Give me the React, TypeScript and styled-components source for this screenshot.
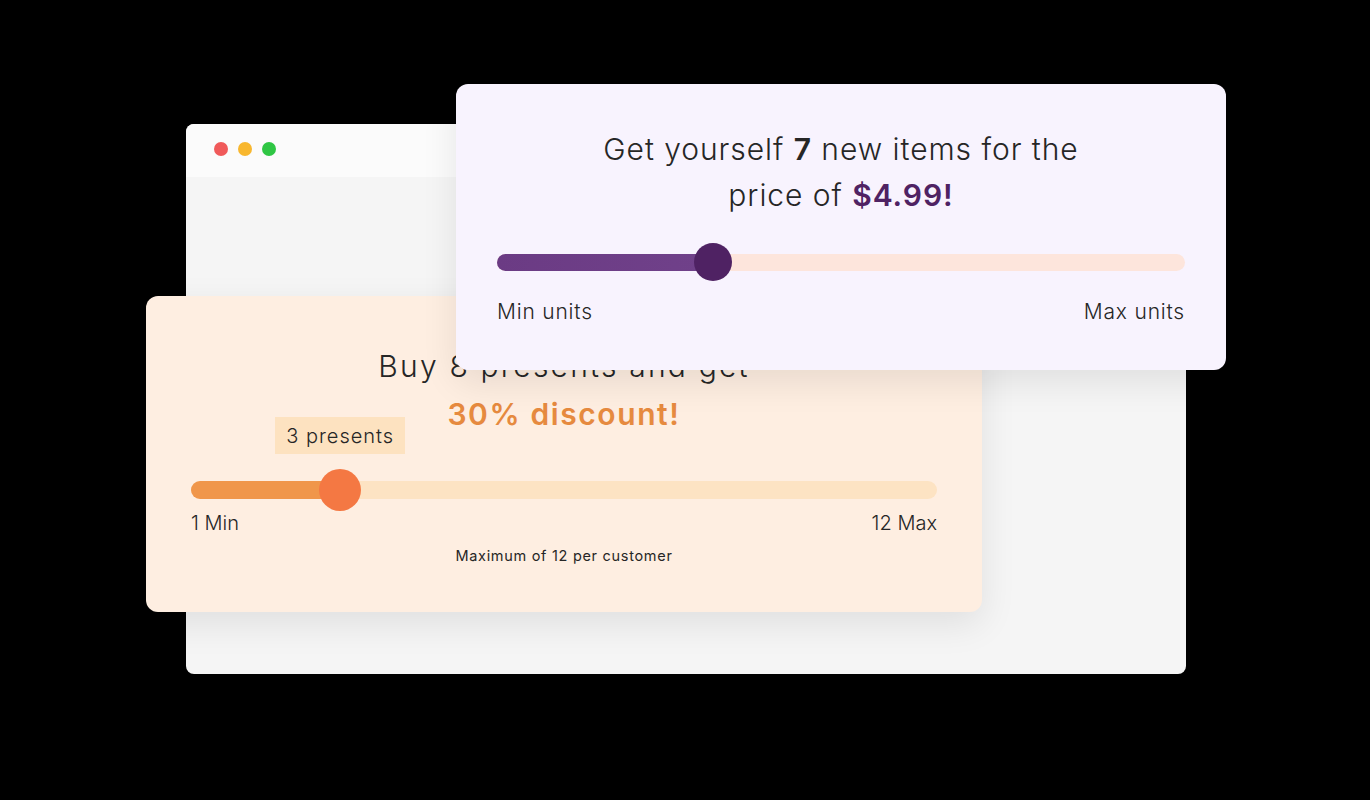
import styled, { createGlobalStyle } from "styled-components";

const GlobalStyle = createGlobalStyle`
  html, body {
    margin: 0;
    padding: 0;
    background: #000;
  }
  body {
    font-family: Inter, "Open Sans", "Noto Sans", sans-serif;
    color: #242424;
  }
`;

const Stage = styled.div`
  position: relative;
  width: 1370px;
  height: 800px;
  overflow: hidden;
  background: #000;
`;

const BrowserWindow = styled.div`
  position: absolute;
  left: 186px;
  top: 124px;
  width: 1000px;
  height: 550px;
  border-radius: 8px;
  overflow: hidden;
  background: #f5f5f5;
  display: flex;
  flex-direction: column;
`;

const BrowserBar = styled.div`
  height: 53px;
  flex-shrink: 0;
  background: #fbfbfb;
  display: flex;
  align-items: center;
  gap: 10px;
  padding: 0 0 4px 28px;
  box-sizing: border-box;
`;

const Dot = styled.span<{ $color: string }>`
  width: 14px;
  height: 14px;
  border-radius: 50%;
  background: ${(p) => p.$color};
`;

const Card = styled.div<{ $bg: string; $left: number; $top: number; $width: number; $pad: string }>`
  position: absolute;
  left: ${(p) => p.$left}px;
  top: ${(p) => p.$top}px;
  width: ${(p) => p.$width}px;
  box-sizing: border-box;
  padding: ${(p) => p.$pad};
  background: ${(p) => p.$bg};
  border-radius: 12px;
  box-shadow: 0 12px 36px rgba(0, 0, 0, 0.09);
  display: flex;
  flex-direction: column;
`;

const Title = styled.div<{ $size: number; $lh: number; $ls: number }>`
  text-align: center;
  font-size: ${(p) => p.$size}px;
  line-height: ${(p) => p.$lh}px;
  letter-spacing: ${(p) => p.$ls}px;
  font-weight: 300;
  color: #262626;
  white-space: nowrap;
`;

const Strong = styled.span<{ $color?: string; $ls?: number }>`
  font-weight: 600;
  color: ${(p) => p.$color ?? "#262626"};
  ${(p) => (p.$ls !== undefined ? `letter-spacing: ${p.$ls}px;` : "")}
`;

const SliderWrap = styled.div<{ $h: number; $mt: number }>`
  position: relative;
  height: ${(p) => p.$h}px;
  margin-top: ${(p) => p.$mt}px;
  display: flex;
  align-items: center;
`;

const Track = styled.div<{ $h: number; $bg: string }>`
  position: relative;
  width: 100%;
  height: ${(p) => p.$h}px;
  border-radius: ${(p) => p.$h / 2}px;
  background: ${(p) => p.$bg};
  overflow: hidden;
`;

const Fill = styled.div<{ $bg: string }>`
  height: 100%;
  background: ${(p) => p.$bg};
`;

const Thumb = styled.div<{ $size: number; $bg: string }>`
  position: absolute;
  top: 50%;
  width: ${(p) => p.$size}px;
  height: ${(p) => p.$size}px;
  border-radius: 50%;
  background: ${(p) => p.$bg};
  transform: translate(-50%, -50%);
`;

const Bubble = styled.div`
  position: absolute;
  bottom: calc(100% + 15px);
  transform: translateX(-50%);
  background: #fde2c0;
  padding: 0 11px;
  height: 37px;
  display: flex;
  align-items: center;
  white-space: nowrap;
  font-size: 20px;
  letter-spacing: 1px;
  font-weight: 300;
  color: #262626;
`;

const Labels = styled.div<{ $mt: number; $lh: number; $size: number; $ls: number }>`
  display: flex;
  justify-content: space-between;
  margin-top: ${(p) => p.$mt}px;
  font-size: ${(p) => p.$size}px;
  letter-spacing: ${(p) => p.$ls}px;
  line-height: ${(p) => p.$lh}px;
  font-weight: 300;
  color: #262626;
`;

const Note = styled.div`
  margin-top: 11px;
  text-align: center;
  font-size: 14.5px;
  letter-spacing: 0.7px;
  line-height: 20px;
  font-weight: 400;
  color: #262626;
`;

type SliderProps = {
  percent: number;
  trackHeight: number;
  thumbSize: number;
  rest: string;
  fill: string;
  thumb: string;
  marginTop: number;
  bubble?: string;
};

const Slider = ({ percent, trackHeight, thumbSize, rest, fill, thumb, marginTop, bubble }: SliderProps) => (
  <SliderWrap $h={thumbSize} $mt={marginTop}>
    <Track $h={trackHeight} $bg={rest}>
      <Fill $bg={fill} style={{ width: `${percent}%` }} />
    </Track>
    <Thumb $size={thumbSize} $bg={thumb} style={{ left: `${percent}%` }} />
    {bubble && <Bubble style={{ left: `${percent}%` }}>{bubble}</Bubble>}
  </SliderWrap>
);

export default function App() {
  return (
    <>
      <GlobalStyle />
      <Stage>
        <BrowserWindow>
          <BrowserBar>
            <Dot $color="#f05a5a" />
            <Dot $color="#f8b72e" />
            <Dot $color="#2fc644" />
          </BrowserBar>
        </BrowserWindow>

        <Card $bg="#feeee1" $left={146} $top={296} $width={836} $pad="46px 45px 46px">
          <Title $size={30} $lh={48} $ls={2.2}>
            Buy 8 presents and get
            <br />
            <Strong $color="#e68a3f" $ls={1.6}>30% discount!</Strong>
          </Title>
          <Slider
            percent={20}
            trackHeight={18}
            thumbSize={42}
            rest="#fde3c3"
            fill="#f0964a"
            thumb="#f47843"
            marginTop={31}
            bubble="3 presents"
          />
          <Labels $mt={0} $lh={24} $size={20} $ls={0}>
            <span>1 Min</span>
            <span>12 Max</span>
          </Labels>
          <Note>Maximum of 12 per customer</Note>
        </Card>

        <Card $bg="#f8f3fe" $left={456} $top={84} $width={770} $pad="42px 41px 44px">
          <Title $size={30} $lh={46} $ls={0.95}>
            Get yourself <Strong>7</Strong> new items for the
            <br />
            price of <Strong $color="#4f2263">$4.99!</Strong>
          </Title>
          <Slider
            percent={31.4}
            trackHeight={17}
            thumbSize={38}
            rest="#fde5dc"
            fill="linear-gradient(90deg, #6b3b84, #70418a)"
            thumb="#4f2263"
            marginTop={25}
          />
          <Labels $mt={17} $lh={28} $size={21} $ls={0.8}>
            <span>Min units</span>
            <span>Max units</span>
          </Labels>
        </Card>
      </Stage>
    </>
  );
}
